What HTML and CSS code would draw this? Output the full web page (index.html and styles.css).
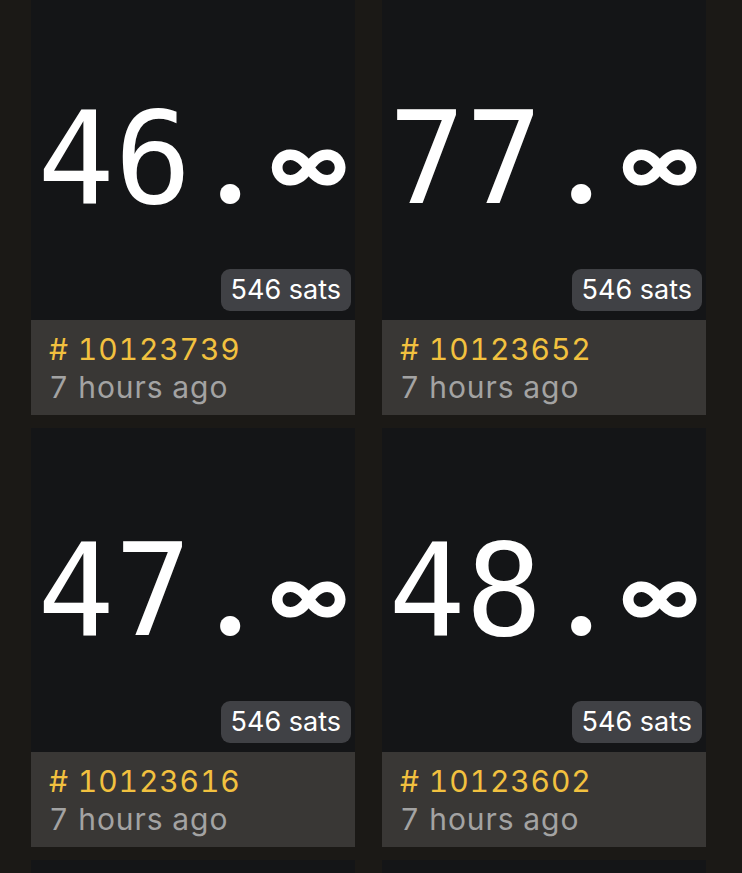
FILE: index.html
```html
<!DOCTYPE html>
<html lang="en">
<head>
    <meta charset="UTF-8">
    <meta name="viewport" content="width=device-width, initial-scale=1.0">
    <title>Inscriptions</title>
    <link rel="stylesheet" href="styles.css">
</head>
<body>
    <div class="grid">
        <div class="card">
            <div class="preview">
                <span class="value">46<span class="dot">.</span><span class="inf">∞</span></span>
                <span class="badge">546 sats</span>
            </div>
            <div class="info">
                <div class="number"># 10123739</div>
                <div class="time">7 hours ago</div>
            </div>
        </div>
        <div class="card">
            <div class="preview">
                <span class="value">77<span class="dot">.</span><span class="inf">∞</span></span>
                <span class="badge">546 sats</span>
            </div>
            <div class="info">
                <div class="number"># 10123652</div>
                <div class="time">7 hours ago</div>
            </div>
        </div>
        <div class="card">
            <div class="preview">
                <span class="value">47<span class="dot">.</span><span class="inf">∞</span></span>
                <span class="badge">546 sats</span>
            </div>
            <div class="info">
                <div class="number"># 10123616</div>
                <div class="time">7 hours ago</div>
            </div>
        </div>
        <div class="card">
            <div class="preview">
                <span class="value">48<span class="dot">.</span><span class="inf">∞</span></span>
                <span class="badge">546 sats</span>
            </div>
            <div class="info">
                <div class="number"># 10123602</div>
                <div class="time">7 hours ago</div>
            </div>
        </div>
        <div class="card">
            <div class="preview"></div>
        </div>
        <div class="card">
            <div class="preview"></div>
        </div>
    </div>
</body>
</html>
```

FILE: styles.css
```css
body {
    margin: 0;
    background: #1b1916;
    font-family: Inter, "Noto Sans", sans-serif;
    overflow: hidden;
}

.grid {
    display: grid;
    grid-template-columns: 324px 324px;
    column-gap: 27px;
    row-gap: 13px;
    margin-top: -4px;
    padding-left: 31px;
}

.card {
    background: #141517;
}

.preview {
    position: relative;
    height: 324px;
    display: flex;
    align-items: center;
    justify-content: center;
}

.value {
    font-family: "DejaVu Sans Mono", monospace;
    font-size: 128px;
    color: #ffffff;
    line-height: 1;
    white-space: nowrap;
    margin-left: -3px;
}

/* the period and infinity glyphs sit in mono cells, but rounder and heavier */
.dot,
.inf {
    display: inline-block;
    width: 77px;
    text-align: center;
    font-family: Inter, sans-serif;
}

.dot {
    font-weight: 600;
}

.inf {
    font-size: 82px;
    font-weight: 700;
    vertical-align: 10px;
}

.badge {
    position: absolute;
    right: 4px;
    bottom: 9px;
    background: #404145;
    color: #ffffff;
    font-size: 27px;
    line-height: 42px;
    padding: 0 10px;
    border-radius: 9px;
}

.info {
    background: #393735;
    height: 95px;
    box-sizing: border-box;
    padding: 10px 18px;
    font-size: 30px;
    line-height: 38px;
    letter-spacing: 0.9px;
    font-feature-settings: "tnum";
}

.number {
    color: #f2c13f;
}

.time {
    color: #a3a3a3;
}
```
